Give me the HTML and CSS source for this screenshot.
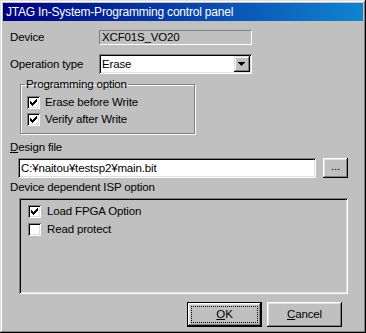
FILE: index.html
```html
<!DOCTYPE html>
<html>
<head>
  <meta charset="UTF-8">
  <title>JTAG In-System-Programming control panel</title>
  <link rel="stylesheet" href="styles.css">
</head>
<body>
  <div class="window">
    <div class="titlebar">JTAG In-System-Programming control panel</div>
    <div class="panel">
      <!-- Dispositivo (solo lectura) -->
      <div class="row row-device">
        <span class="label">Device</span>
        <div class="field">XCF01S_VO20</div>
      </div>
      <div class="row row-op">
        <span class="label">Operation type</span>
        <div class="combo">
          <span class="combo-text">Erase</span>
          <span class="combo-btn">
            <svg width="7" height="4" viewBox="0 0 7 4" shape-rendering="crispEdges"><path d="M0 0h7v1h-1v1h-1v1h-1v1h-1v-1h-1v-1h-1v-1h-1z" fill="#000"/></svg>
          </span>
        </div>
      </div>

      <fieldset class="group">
        <legend>Programming option</legend>
        <label class="check">
          <span class="box"><svg width="13" height="13" viewBox="0 0 13 13" shape-rendering="crispEdges"><path d="M3 5h1v3h-1zM4 6h1v3h-1zM5 7h1v3h-1zM6 6h1v3h-1zM7 5h1v3h-1zM8 4h1v3h-1zM9 3h1v3h-1z" fill="#000"/></svg></span>
          Erase before Write
        </label>
        <label class="check">
          <span class="box"><svg width="13" height="13" viewBox="0 0 13 13" shape-rendering="crispEdges"><path d="M3 5h1v3h-1zM4 6h1v3h-1zM5 7h1v3h-1zM6 6h1v3h-1zM7 5h1v3h-1zM8 4h1v3h-1zM9 3h1v3h-1z" fill="#000"/></svg></span>
          Verify after Write
        </label>
      </fieldset>

      <div class="caption caption-file"><u>D</u>esign file</div>
      <div class="row row-file">
        <div class="edit">C:¥naitou¥testsp2¥main.bit</div>
        <button class="btn btn-browse">...</button>
      </div>

      <div class="caption caption-isp">Device dependent ISP option</div>
      <div class="isp">
        <label class="check">
          <span class="box"><svg width="13" height="13" viewBox="0 0 13 13" shape-rendering="crispEdges"><path d="M3 5h1v3h-1zM4 6h1v3h-1zM5 7h1v3h-1zM6 6h1v3h-1zM7 5h1v3h-1zM8 4h1v3h-1zM9 3h1v3h-1z" fill="#000"/></svg></span>
          Load FPGA Option
        </label>
        <label class="check">
          <span class="box"></span>
          Read protect
        </label>
      </div>

      <div class="actions">
        <button class="btn btn-default"><u>O</u>K</button>
        <button class="btn"><u>C</u>ancel</button>
      </div>
    </div>
  </div>
</body>
</html>
```

FILE: styles.css
```css
:root {
  --face: #c0c0c0;
  --light: #dfdfdf;
  --shadow: #808080;
  --dark: #000000;
  --hilite: #ffffff;
}
body {
  margin: 0;
  font-family: 'Liberation Sans', Arial, sans-serif;
  font-size: 11.5px;
  letter-spacing: -0.15px;
  line-height: 13px;
  color: #000;
}
.window {
  width: 366px;
  height: 333px;
  box-sizing: border-box;
  padding: 3px;
  background: var(--face);
  box-shadow: inset -1px -1px var(--dark), inset 1px 1px var(--light),
              inset -2px -2px var(--shadow), inset 2px 2px var(--hilite);
  display: flex;
  flex-direction: column;
}
.titlebar {
  height: 18px;
  display: flex;
  align-items: center;
  padding-left: 3px;
  color: #fff;
  font-size: 12px;
  letter-spacing: -0.2px;
  background: linear-gradient(to right, #000080, #1084d0);
}
.panel {
  flex: 1;
  display: flex;
  flex-direction: column;
  padding-left: 7px;
}
.row {
  display: flex;
  align-items: center;
}
.label {
  width: 89px;
}
.row-device {
  margin-top: 9px;
}
.field {
  width: 153px;
  height: 15px;
  box-sizing: border-box;
  border: 1px solid;
  border-color: var(--shadow) var(--hilite) var(--hilite) var(--shadow);
  padding-left: 2px;
  line-height: 13px;
}
.row-op {
  margin-top: 9px;
}
/* Combo y campo de texto con borde hundido */
.combo,
.edit {
  box-sizing: border-box;
  height: 20px;
  background: #fff;
  box-shadow: inset 1px 1px var(--shadow), inset -1px -1px var(--hilite),
              inset 2px 2px var(--dark), inset -2px -2px var(--light);
  display: flex;
  align-items: center;
}
.combo {
  width: 153px;
  padding: 2px;
}
.combo-text {
  flex: 1;
  padding-left: 1px;
}
.combo-btn {
  width: 16px;
  height: 16px;
  box-sizing: border-box;
  background: var(--face);
  box-shadow: inset -1px -1px var(--dark), inset 1px 1px var(--light),
              inset -2px -2px var(--shadow), inset 2px 2px var(--hilite);
  display: flex;
  align-items: center;
  justify-content: center;
}
.combo-btn svg {
  display: block;
  margin-left: -1px;
}
.group {
  margin: 4px 0 0 10px;
  width: 175px;
  box-sizing: border-box;
  padding: 5px 6px 7px;
  border: 1px solid var(--shadow);
  box-shadow: inset 1px 1px var(--hilite), 1px 1px var(--hilite);
  min-inline-size: 0;
  display: flex;
  flex-direction: column;
  gap: 4px;
}
.group legend {
  padding: 0 1px;
  margin-left: -2px;
  line-height: 13px;
}
.check {
  display: flex;
  align-items: center;
  gap: 5px;
  height: 13px;
}
.box {
  width: 13px;
  height: 13px;
  flex: none;
  box-sizing: border-box;
  background: #fff;
  box-shadow: inset 1px 1px var(--shadow), inset -1px -1px var(--hilite),
              inset 2px 2px var(--dark), inset -2px -2px var(--light);
}
.box svg {
  display: block;
}
.caption-file {
  margin-top: 7px;
}
.caption u {
  text-decoration-thickness: 1px;
}
.row-file {
  margin-top: 4px;
  margin-left: 8px;
}
.edit {
  width: 298px;
  padding-left: 3px;
}
.btn {
  font: inherit;
  letter-spacing: inherit;
  color: #000;
  background: var(--face);
  border: none;
  padding: 0;
  box-sizing: border-box;
  box-shadow: inset -1px -1px var(--dark), inset 1px 1px var(--hilite),
              inset -2px -2px var(--shadow), inset 2px 2px var(--light);
}
.btn-browse {
  width: 25px;
  height: 20px;
  margin-left: 7px;
  padding-bottom: 3px;
}
.caption-isp {
  margin-top: 3px;
}
.isp {
  margin: 4px 0 0 9px;
  width: 329px;
  height: 96px;
  box-sizing: border-box;
  padding: 7px 9px;
  box-shadow: inset 1px 1px var(--shadow), inset -1px -1px var(--hilite),
              inset 2px 2px var(--dark), inset -2px -2px var(--light);
  display: flex;
  flex-direction: column;
  gap: 5px;
}
.isp .check {
  gap: 6px;
}
.actions {
  margin-top: 8px;
  padding-right: 21px;
  display: flex;
  justify-content: flex-end;
  gap: 5px;
}
.actions .btn {
  width: 75px;
  height: 25px;
}
.btn-default {
  border: 1px solid #000;
  outline: 1px dotted #000;
  outline-offset: -5px;
}
```
